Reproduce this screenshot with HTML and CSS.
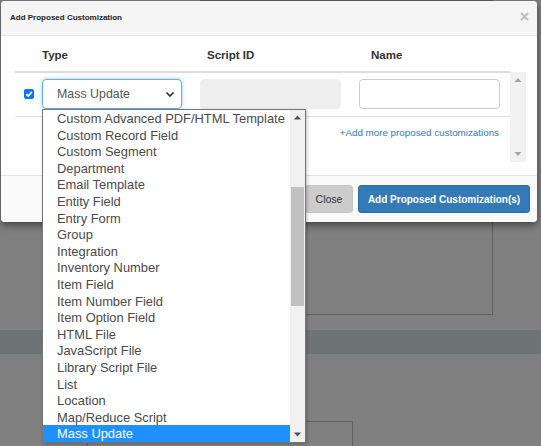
FILE: index.html
```html
<!DOCTYPE html>
<html>
<head>
<meta charset="utf-8">
<link rel="stylesheet" href="styles.css">
</head>
<body>
<div class="page">
  <div class="bg-box1"></div>
  <div class="bg-band"></div>
  <div class="bg-box2"></div>
</div>

<div class="modal">
  <div class="modal-header">
    <span class="title">Add Proposed Customization</span>
    <svg class="close-x" width="9" height="9" viewBox="0 0 9 9"><path d="M1 1L8 8M8 1L1 8" stroke="#bcbcbc" stroke-width="1.8"/></svg>
  </div>
  <div class="modal-body">
    <div class="thead">
      <div></div>
      <div class="th">Type</div>
      <div class="th th-id">Script ID</div>
      <div class="th th-name">Name</div>
    </div>
    <div class="scroll">
      <div class="rows">
        <div class="row">
          <div class="cell-check">
            <span class="checkbox"><svg width="10" height="10" viewBox="0 0 10 10"><path d="M2.2 5.2L4.2 7.1L7.9 2.9" fill="none" stroke="#fff" stroke-width="1.6"/></svg></span>
          </div>
          <div>
            <div class="select"><span>Mass Update</span><svg width="10" height="7" viewBox="0 0 10 7"><path d="M1.5 1.5L5 5L8.5 1.5" fill="none" stroke="#333" stroke-width="1.7"/></svg></div>
          </div>
          <div><div class="input disabled"></div></div>
          <div><div class="input"></div></div>
        </div>
        <div class="addmore"><a class="link">+Add more proposed customizations</a></div>
      </div>
      <div class="vscroll">
        <svg width="16" height="16" viewBox="0 0 16 16"><path d="M4.5 10L8 6L11.5 10Z" fill="#a3a3a3"/></svg>
        <svg width="16" height="16" viewBox="0 0 16 16"><path d="M4.5 6L8 10L11.5 6Z" fill="#a3a3a3"/></svg>
      </div>
    </div>
  </div>
  <div class="modal-footer">
    <button class="btn btn-close">Close</button>
    <button class="btn btn-primary">Add Proposed Customization(s)</button>
  </div>
</div>

<div class="dropdown">
  <ul class="options">
    <li>Custom Advanced PDF/HTML Template</li>
    <li>Custom Record Field</li>
    <li>Custom Segment</li>
    <li>Department</li>
    <li>Email Template</li>
    <li>Entity Field</li>
    <li>Entry Form</li>
    <li>Group</li>
    <li>Integration</li>
    <li>Inventory Number</li>
    <li>Item Field</li>
    <li>Item Number Field</li>
    <li>Item Option Field</li>
    <li>HTML File</li>
    <li>JavaScript File</li>
    <li>Library Script File</li>
    <li>List</li>
    <li>Location</li>
    <li>Map/Reduce Script</li>
    <li class="selected">Mass Update</li>
  </ul>
  <div class="dscroll">
    <svg class="arrow" width="15" height="15" viewBox="0 0 15 15"><path d="M4 9.5L7.5 5.5L11 9.5Z" fill="#505050"/></svg>
    <div class="thumb"></div>
    <div class="spacer"></div>
    <svg class="arrow" width="15" height="15" viewBox="0 0 15 15"><path d="M4 5.5L7.5 9.5L11 5.5Z" fill="#505050"/></svg>
  </div>
</div>
</body>
</html>
```

FILE: styles.css
```css
html, body {
  margin: 0;
  padding: 0;
}
body {
  width: 541px;
  height: 446px;
  overflow: hidden;
  background: #808080;
  font-family: "Liberation Sans", Arial, sans-serif;
  position: relative;
}

/* background page (under overlay) */
.page {
  display: flex;
  flex-direction: column;
}
.bg-box1 {
  box-sizing: border-box;
  margin-left: 200px;
  width: 293px;
  height: 315px;
  border: 1px solid #616161;
}
.bg-band {
  margin-top: 15px;
  height: 24px;
  background: #6e7476;
}
.bg-box2 {
  box-sizing: border-box;
  margin-top: 67px;
  margin-left: 87px;
  width: 266px;
  height: 25px;
  border: 1px solid #616161;
  border-bottom: none;
}

/* modal */
.modal {
  position: absolute;
  left: 1px;
  top: 1px;
  width: 536px;
  background: #fff;
  border-radius: 4px;
  box-shadow: 0 3px 9px rgba(0, 0, 0, 0.5);
  overflow: hidden;
}
.modal-header {
  height: 34px;
  border-bottom: 1px solid #e3e3e3;
  background: #f5f5f5;
  display: flex;
  align-items: center;
  justify-content: space-between;
  padding: 0 9px;
}
.title {
  font-size: 8px;
  font-weight: bold;
  color: #222;
  margin-top: -2px;
}
.close-x {
  margin-top: -4px;
  margin-right: -1px;
}
.modal-body {
  padding: 0 11px 13px 14px;
}
.thead {
  display: grid;
  grid-template-columns: 27px 158px 159px 151px;
  width: 495px;
  padding: 12px 0 9px;
  line-height: 14px;
  border-bottom: 2px solid #dcdcdc;
}
.th {
  font-size: 11.5px;
  font-weight: bold;
  color: #333;
}
.th-id { padding-left: 7px; }
.th-name { padding-left: 12px; }

.scroll {
  display: flex;
  height: 89px;
}
.rows {
  width: 495px;
}
.row {
  display: grid;
  grid-template-columns: 27px 158px 159px 151px;
  padding: 6px 0 7px;
  border-bottom: 1px solid #dddddd;
}
.cell-check {
  display: flex;
  align-items: center;
  padding-left: 9px;
}
.checkbox {
  width: 10px;
  height: 10px;
  border-radius: 2px;
  background: #0b74f0;
  display: flex;
}
.select {
  box-sizing: border-box;
  width: 140px;
  height: 30px;
  border: 1px solid #66afe9;
  border-radius: 4px;
  box-shadow: 0 0 4px rgba(102, 175, 233, 0.6);
  display: flex;
  align-items: center;
  justify-content: space-between;
  padding: 0 6px 0 14px;
  font-size: 12.4px;
  color: #555;
}
.input {
  box-sizing: border-box;
  width: 141px;
  height: 30px;
  border: 1px solid #cccccc;
  border-radius: 4px;
  background: #fff;
}
.input.disabled {
  background: #eeeeee;
  border-color: #eeeeee;
}
.addmore {
  text-align: right;
  padding: 7px 11px 0 0;
  line-height: 14px;
}
.link {
  font-size: 9.8px;
  color: #337ab7;
}
.vscroll {
  width: 16px;
  margin-top: -1px;
  height: 90px;
  background: #f1f1f1;
  display: flex;
  flex-direction: column;
  justify-content: space-between;
}
.vscroll svg { display: block; }

.modal-footer {
  border-top: 1px solid #e3e3e3;
  background: #fafafa;
  padding: 9px 7px 9px 0;
  display: flex;
  justify-content: flex-end;
  gap: 5px;
}
.btn {
  height: 28px;
  border-radius: 3px;
  font-family: "Liberation Sans", Arial, sans-serif;
  padding: 0;
  margin: 0;
}
.btn-close {
  width: 48px;
  background: #cccccc;
  border: 1px solid #c4c4c4;
  color: #333;
  font-size: 10.5px;
}
.btn-primary {
  width: 172px;
  background: #337ab7;
  border: 1px solid #2e6da4;
  color: #fff;
  font-size: 10px;
  font-weight: bold;
}

/* open select dropdown */
.dropdown {
  position: absolute;
  left: 42px;
  top: 109px;
  width: 262px;
  height: 332px;
  border: 1px solid #767676;
  background: #fff;
  display: flex;
  box-shadow: 1px 1px 3px rgba(0, 0, 0, 0.25);
}
.options {
  list-style: none;
  margin: 0;
  padding: 0;
  width: 247px;
}
.options li {
  height: 16.6px;
  line-height: 17.6px;
  padding-left: 14px;
  font-size: 12.9px;
  color: #4a4a4a;
  white-space: nowrap;
}
.options li.selected {
  background: #1e90ff;
  color: #fff;
}
.dscroll {
  width: 15px;
  background: #f1f1f1;
  display: flex;
  flex-direction: column;
}
.dscroll .arrow { display: block; flex: none; }
.thumb {
  margin: 62px 1px 0;
  height: 119px;
  background: #c1c1c1;
  flex: none;
}
.spacer { flex: 1; }
```
